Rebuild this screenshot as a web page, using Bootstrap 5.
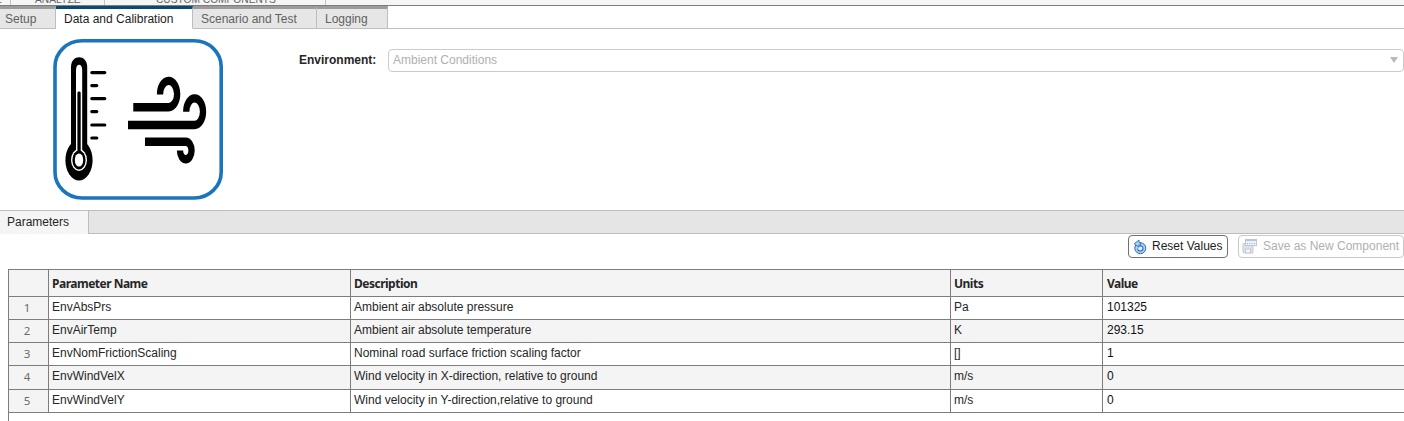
<!DOCTYPE html>
<html lang="en">
<head>
<meta charset="utf-8">
<title>Data and Calibration</title>
<link href="https://cdn.jsdelivr.net/npm/bootstrap@5.3.0/dist/css/bootstrap.min.css" rel="stylesheet">
<style>
body{font:12px/14px "Liberation Sans",Arial,sans-serif;color:#262626;height:421px;overflow:hidden;background:#fff}
.ribbon{height:6px;background:#f5f5f5;border-bottom:1px solid #7d7d7d;color:#666}
.ribbon div{height:5px;border-right:1px solid #c4c4c4;overflow:hidden;display:flex;align-items:flex-end;justify-content:flex-start;font-size:10.2px;line-height:12px}
.ribbon span{margin-bottom:-1px;white-space:nowrap}
.tabs{height:23px;border-bottom:1px solid #bdbdbd}
.tabs .nav-link{height:23px;padding:3px 0 0;border:0;border-top:3px solid #9b9b9b;border-right:1px solid #bdbdbd;border-bottom:1px solid #bdbdbd;border-radius:0;background:#e6e6e6;color:#616161;white-space:nowrap}
.tabs .nav-link.active{border-top-color:#0b4975;border-bottom-color:#fff;background:#fff;color:#1c1c1c}
.tabs .nav-link.active{border-right-color:#bdbdbd}
.env{height:181px;padding:10px 0 0 53px}
.env-label{width:77px;margin:14px 12px 0 76px;font-weight:700;white-space:nowrap}
.env-select{height:23px;margin-top:10px;border:1px solid #cbcbcb;border-radius:4px;padding:0 5px 2px 4px;color:#b0b0b0}
.panel-bar{height:24px;background:#e5e5e5;border-top:1px solid #bdbdbd;border-bottom:1px solid #bdbdbd}
.panel-tab{width:89px;height:23px;background:#f5f5f5;border-right:1px solid #bdbdbd;padding:4px 0 0 7px}
.tools{height:35px;padding-top:1px;gap:10px}
.tools .btn{height:23px;font-size:12px;line-height:14px;padding:0 4px;border-radius:4px;background:#fff;white-space:nowrap}
.tools .btn span{margin-bottom:2px}
.btn-reset,.btn-reset:hover{border:1px solid #707070;color:#1c1c1c;width:100px}
.tools .btn-save{border:1px solid #c8c8c8;color:#b0b0b0;width:166px;opacity:1}
.grid-box{margin-left:8px;height:152px;border-left:1px solid #7d7d7d;border-top:1px solid #7d7d7d}
.params{table-layout:fixed;width:1395px;border-collapse:separate;border-spacing:0}
.params th,.params td{border:0 solid #7d7d7d;border-right-width:1px;border-bottom-width:1px;padding:0 3px;white-space:nowrap;line-height:14px;overflow:hidden}
.params th:last-child,.params td:last-child{border-right:0}
.params thead tr{height:27px;background:#f4f4f4}
.params thead th{font:700 12px/16px "Noto Sans","Open Sans",sans-serif;letter-spacing:-.5px;padding-top:2px}
.params tbody tr{height:23px}
.params tbody tr:nth-child(4){height:24px}
.params tbody tr:nth-child(even){background:#f4f4f4}
.params tbody td{padding-bottom:3px}
.params tbody th{background:#f4f4f4;color:#6a6a6a;font:400 11.5px/14px "Noto Sans",sans-serif;text-align:center;padding:0 3px 1px 0}
.params td:last-child{color:#101010}
.params td:nth-child(5){padding-left:4px}
</style>
</head>
<body>
<div class="ribbon d-flex">
  <div style="width:11px"><span style="margin-left:-5px">E</span></div>
  <div style="width:94px"><span style="margin-left:24px">ANALYZE</span></div>
  <div style="width:221px"><span style="margin-left:51px">CUSTOM COMPONENTS</span></div>
</div>
<nav class="nav tabs">
  <a class="nav-link" style="width:56px;padding-left:5px"><span>Setup</span></a>
  <a class="nav-link active" style="width:137px;padding-left:8px"><span>Data and Calibration</span></a>
  <a class="nav-link" style="width:124px;padding-left:8px"><span>Scenario and Test</span></a>
  <a class="nav-link" style="width:71px;padding-left:8px"><span>Logging</span></a>
</nav>
<section class="env d-flex align-items-start">
  <svg class="flex-shrink-0" width="170" height="161" viewBox="53 39 170 161">
    <rect x="55" y="40.8" width="166.2" height="157.2" rx="27" ry="26" fill="#fff" stroke="#1b75bc" stroke-width="3.6"/>
    <path d="M71 147V67c0-13 16.2-13 16.2 0v80z"/>
    <ellipse cx="79" cy="160.3" rx="13.6" ry="20.2"/>
    <path d="M76 153V70c0-7 6.2-7 6.2 0v83z" fill="#fff"/>
    <ellipse cx="79" cy="160" rx="8" ry="11" fill="#fff"/>
    <ellipse cx="79" cy="160" rx="6.6" ry="9.4"/>
    <path d="M77.4 153V93c0-2 3.3-2 3.3 0v60z"/>
    <ellipse cx="79" cy="160" rx="4.2" ry="6.6" fill="#fff"/>
    <path d="M91.8 72.6h13M91.8 98.6h13M91.8 125h13M91.8 85.6h5M91.8 111.6h5M91.8 138h5" stroke="#000" stroke-width="3.2" stroke-linecap="round"/>
    <g transform="scale(.75 1)" fill="none" stroke="#000" stroke-width="8.4">
      <path d="M177.7 107.3H224.9A11.4 13.2 0 1 0 213.4 94.5"/>
      <path d="M170.7 125H259.5A11.2 13.3 0 1 0 248.3 111.7"/>
      <path d="M193.3 141.7H247.7A7.7 8.8 0 1 1 240 150.5"/>
    </g>
  </svg>
  <div class="env-label"><span>Environment:</span></div>
  <div class="env-select flex-grow-1 d-flex align-items-center justify-content-between">
    <span>Ambient Conditions</span>
    <svg width="8" height="6" viewBox="0 0 8 6"><path d="M0 0h8L4 6z" fill="#b9b9b9"/></svg>
  </div>
</section>
<div class="panel-bar"><div class="panel-tab"><span>Parameters</span></div></div>
<div class="tools d-flex justify-content-end align-items-start">
  <button class="btn btn-reset d-flex align-items-center"><svg class="flex-shrink-0" width="14" height="16" viewBox="0 0 14 16" style="margin:1px 5px 0 0"><circle cx="7.3" cy="9.2" r="5.5" fill="#a9d0f5" stroke="#2f6fb5"/><path d="M4.6 9.6c0 3.4 5.4 3.2 5.4-.3C10 7.2 8.3 6.6 6 7" fill="#e4f1fd" stroke="#2f6fb5" stroke-width="1.1"/><path d="M1.2 4.7 6 1v2.4l1.5.3v2.2L6 6v2.3z" fill="#a9d0f5" stroke="#2f6fb5" stroke-width=".9" stroke-linejoin="round"/></svg><span>Reset Values</span></button>
  <button class="btn btn-save d-flex align-items-center" disabled><svg class="flex-shrink-0" width="15" height="16" viewBox="0 0 15 16" style="margin:0 6px 1px -1px"><path d="M1 5.5h10v9.5H2L1 14z" fill="#dde0e5" stroke="#c6cbd3"/><path d="M3.5 11h5v4h-5z" fill="#f4f5f7" stroke="#c5cad2"/><rect x="3.5" y="1.5" width="11" height="6" fill="#edf2f8" stroke="#bac7d8"/><path d="M3.5 2h11" stroke="#b3c6de" stroke-width="2"/><path d="M5 5.5h8" stroke="#9db1cb" stroke-dasharray="1 1.3"/></svg><span>Save as New Component</span></button>
</div>
<div class="grid-box">
<table class="params">
  <colgroup><col style="width:40px"><col style="width:302px"><col style="width:600px"><col style="width:152px"><col></colgroup>
  <thead><tr><th></th><th><span>Parameter Name</span></th><th><span>Description</span></th><th><span>Units</span></th><th style="padding-left:4px"><span>Value</span></th></tr></thead>
  <tbody>
    <tr><th>1</th><td>EnvAbsPrs</td><td>Ambient air absolute pressure</td><td>Pa</td><td>101325</td></tr>
    <tr><th>2</th><td>EnvAirTemp</td><td>Ambient air absolute temperature</td><td>K</td><td>293.15</td></tr>
    <tr><th>3</th><td>EnvNomFrictionScaling</td><td>Nominal road surface friction scaling factor</td><td>[]</td><td>1</td></tr>
    <tr><th>4</th><td>EnvWindVelX</td><td>Wind velocity in X-direction, relative to ground</td><td>m/s</td><td>0</td></tr>
    <tr><th>5</th><td>EnvWindVelY</td><td>Wind velocity in Y-direction,relative to ground</td><td>m/s</td><td>0</td></tr>
  </tbody>
</table>
</div>
<script src="https://cdn.jsdelivr.net/npm/bootstrap@5.3.0/dist/js/bootstrap.bundle.min.js"></script>
</body>
</html>
